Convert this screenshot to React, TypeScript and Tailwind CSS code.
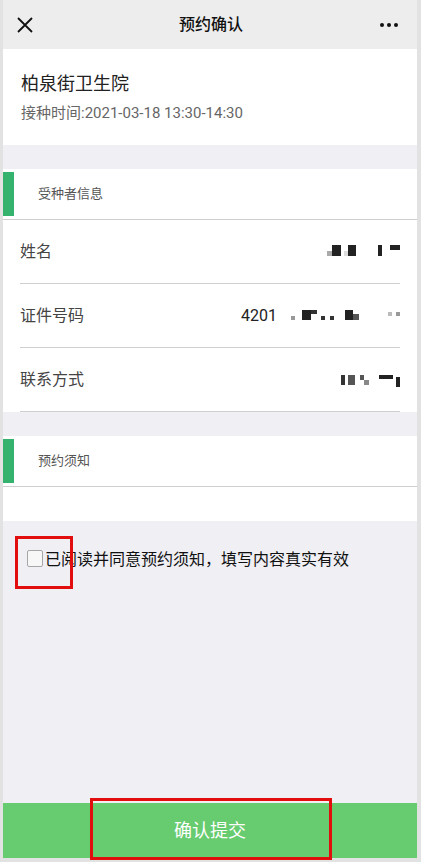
import React from "react";

const font = { fontFamily: 'Roboto, "Noto Sans CJK SC", sans-serif' };

type Block = { w: number; h: number; c: string; mt?: number };

function Mosaic({ blocks }: { blocks: Block[] }) {
  return (
    <div className="flex items-start h-[14px]">
      {blocks.map((b, i) => (
        <div key={i} style={{ width: b.w, height: b.h, background: b.c, marginTop: b.mt ?? 0 }} />
      ))}
    </div>
  );
}

function SectionHeader({ title }: { title: string }) {
  return (
    <div className="h-[51px] bg-white flex items-center border-b border-[#cfcfcf] relative shrink-0">
      <div className="absolute left-0 top-[3px] bottom-[3px] w-[11px] bg-[#35b26d]" />
      <span className="ml-[35px] text-[13px] text-[#555]">{title}</span>
    </div>
  );
}

function Row({ label, children }: { label: string; children: React.ReactNode }) {
  return (
    <div className="bg-white px-[17px] shrink-0">
      <div className="h-[64px] flex items-center justify-between border-b border-[#d0d0d0]">
        <span className="text-[16px] text-[#444]">{label}</span>
        {children}
      </div>
    </div>
  );
}

export default function App() {
  return (
    <div className="h-[862px] bg-[#e2e2e2] pl-[3px] pr-[4px] pb-[4px] flex flex-col relative" style={font}>
      <div className="h-[49px] bg-[#ededed] flex items-center justify-between px-[13px] shrink-0">
        <svg width="18" height="18" viewBox="0 0 18 18">
          <path d="M2 2 L16 16 M16 2 L2 16" stroke="#111" strokeWidth="1.8" fill="none" />
        </svg>
        <span className="text-[16px] font-medium text-[#111] ml-[8px]">预约确认</span>
        <div className="flex gap-[3px] mr-[6px]">
          <div className="w-[4px] h-[4px] rounded-full bg-[#111]" />
          <div className="w-[4px] h-[4px] rounded-full bg-[#111]" />
          <div className="w-[4px] h-[4px] rounded-full bg-[#111]" />
        </div>
      </div>

      <div className="h-[96px] bg-white px-[18px] pt-[21px] shrink-0">
        <div className="text-[18px] text-[#222] leading-[28px]">柏泉街卫生院</div>
        <div className="text-[15px] text-[#666] leading-[22px] mt-[4px]">接种时间:2021-03-18 13:30-14:30</div>
      </div>

      <div className="h-[24px] bg-[#efeff4] shrink-0" />

      <SectionHeader title="受种者信息" />
      <Row label="姓名">
        <Mosaic
          blocks={[
            { w: 5, h: 5, c: "#aaa", mt: 6 },
            { w: 9, h: 11, c: "#222" },
            { w: 3, h: 11, c: "transparent" },
            { w: 4, h: 5, c: "#ddd", mt: 6 },
            { w: 8, h: 11, c: "#222" },
            { w: 22, h: 11, c: "transparent" },
            { w: 4, h: 11, c: "#222" },
            { w: 8, h: 5, c: "transparent" },
            { w: 10, h: 5, c: "#222" },
          ]}
        />
      </Row>
      <Row label="证件号码">
        <div className="flex items-center">
          <span className="text-[16px] text-[#222] mr-[14px]">4201</span>
          <Mosaic
            blocks={[
              { w: 4, h: 4, c: "#999", mt: 7 },
              { w: 7, h: 4, c: "transparent" },
              { w: 9, h: 10, c: "#222", mt: 1 },
              { w: 6, h: 4, c: "#333", mt: 1 },
              { w: 4, h: 4, c: "transparent" },
              { w: 4, h: 4, c: "#333", mt: 7 },
              { w: 5, h: 4, c: "transparent" },
              { w: 4, h: 4, c: "#333", mt: 7 },
              { w: 11, h: 4, c: "transparent" },
              { w: 8, h: 10, c: "#222", mt: 1 },
              { w: 6, h: 6, c: "#555", mt: 5 },
              { w: 29, h: 4, c: "transparent" },
              { w: 4, h: 4, c: "#bbb", mt: 3 },
              { w: 4, h: 4, c: "transparent" },
              { w: 4, h: 4, c: "#999", mt: 3 },
            ]}
          />
        </div>
      </Row>
      <Row label="联系方式">
        <Mosaic
          blocks={[
            { w: 4, h: 10, c: "#333", mt: 2 },
            { w: 3, h: 10, c: "transparent" },
            { w: 7, h: 10, c: "#555", mt: 2 },
            { w: 5, h: 10, c: "transparent" },
            { w: 4, h: 5, c: "#555", mt: 2 },
            { w: 5, h: 5, c: "#888", mt: 7 },
            { w: 10, h: 5, c: "transparent" },
            { w: 14, h: 4, c: "#222", mt: 2 },
            { w: 3, h: 10, c: "transparent" },
            { w: 4, h: 10, c: "#222", mt: 4 },
          ]}
        />
      </Row>

      <div className="h-[24px] bg-[#efeff4] shrink-0" />

      <SectionHeader title="预约须知" />
      <div className="h-[34px] bg-white shrink-0" />

      <div className="flex-1 bg-[#efeff4] pt-[27px] pl-[24px]">
        <label className="flex items-center">
          <span className="w-[16px] h-[17px] rounded-[2px] border border-[#a6a6a6] bg-[#f7f7f7] mb-[3px]" />
          <span className="text-[16px] text-[#111] ml-[2px]">已阅读并同意预约须知，填写内容真实有效</span>
        </label>
      </div>

      <button className="h-[55px] bg-[#67cb6f] text-white text-[18px] shrink-0">确认提交</button>

      <div className="absolute left-[15px] top-[536px] w-[58px] h-[53px] border-[3px] border-[#e20e0e]" />
      <div className="absolute left-[90px] top-[798px] w-[242px] h-[62px] border-[3px] border-[#e20e0e]" />
    </div>
  );
}
